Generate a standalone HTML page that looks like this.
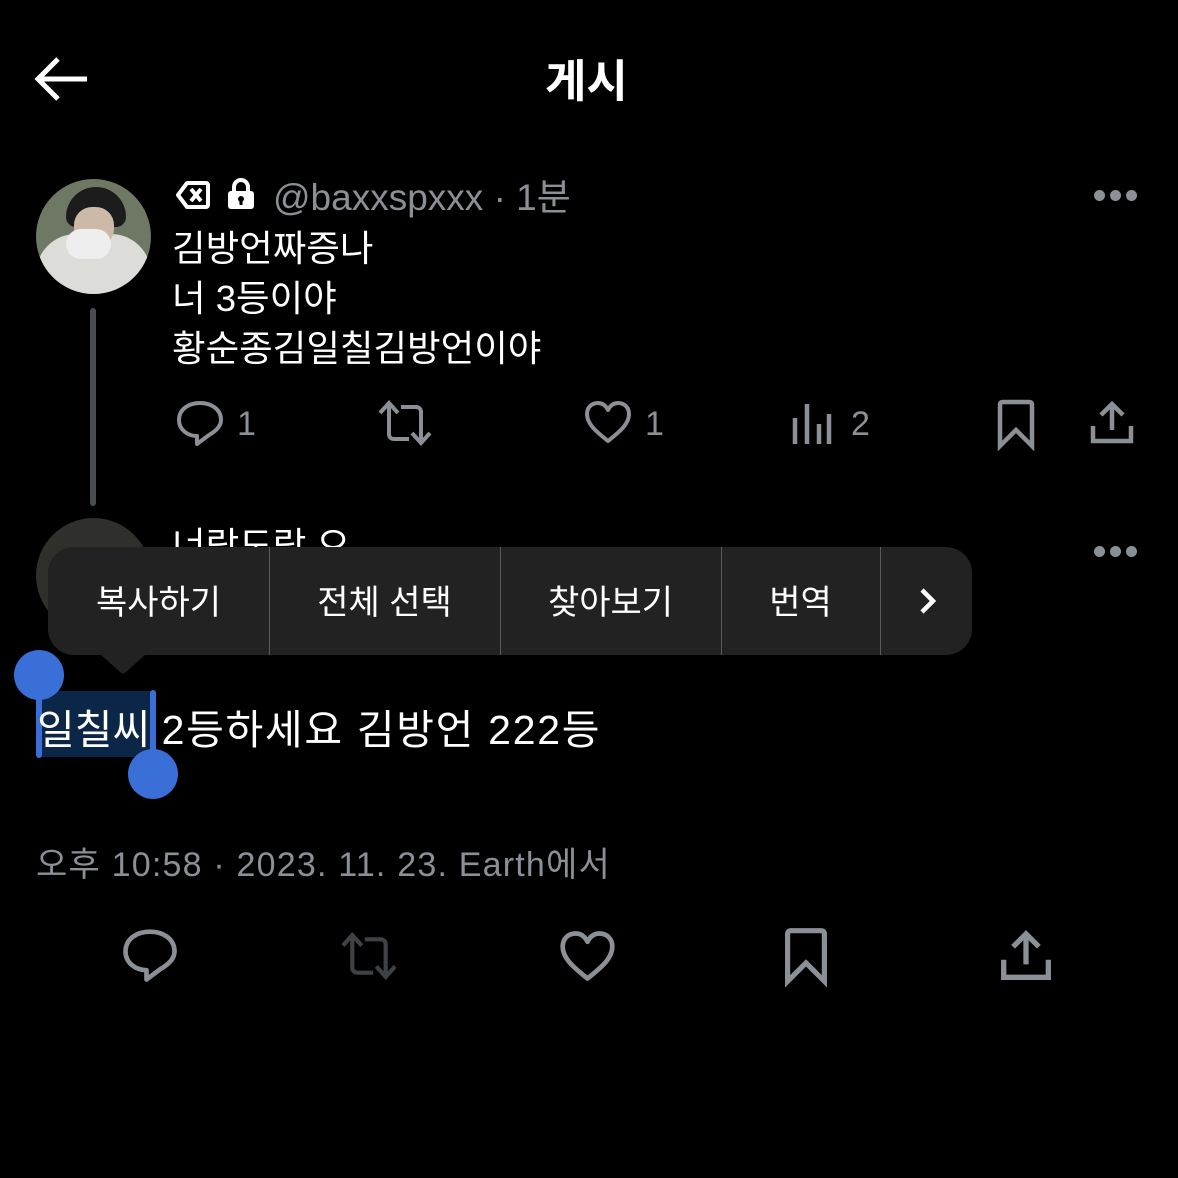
<!DOCTYPE html>
<html><head><meta charset="utf-8">
<style>
html,body{margin:0;padding:0;background:#000;}
body{width:1178px;height:1178px;position:relative;overflow:hidden;font-family:"Liberation Sans","Noto Sans CJK KR",sans-serif;}
.a{position:absolute;white-space:nowrap;}
.w{color:#fff;}
.g{color:#8b9097;}
svg{position:absolute;overflow:visible;}
</style></head><body>
<!-- header -->
<svg style="left:33px;top:56px" width="56" height="46" viewBox="0 0 56 46"><path d="M54 23H5M25 3L5 23l20 20" fill="none" stroke="#fff" stroke-width="5"/></svg>
<div class="a w" style="left:545px;top:48px;font-size:45px;line-height:60px;font-weight:bold;font-family:'Noto Sans CJK KR',sans-serif;">게시</div>

<!-- avatar 1 -->
<div class="a" style="left:36px;top:179px;width:115px;height:115px;border-radius:50%;overflow:hidden;background:#6f7864;">
  <div class="a" style="left:0;top:55px;width:115px;height:70px;background:#dcdcd8;border-radius:40px 40px 0 0"></div>
  <div class="a" style="left:30px;top:8px;width:60px;height:40px;background:#1c1c1c;border-radius:30px 30px 10px 10px"></div>
  <div class="a" style="left:38px;top:28px;width:40px;height:40px;background:#cdb9a8;border-radius:45%"></div>
  <div class="a" style="left:30px;top:50px;width:45px;height:30px;background:#eee;border-radius:20px"></div>
</div>
<div class="a" style="left:90px;top:308px;width:6px;height:198px;background:#4a4d50;border-radius:3px"></div>

<!-- user row -->
<svg style="left:175px;top:180px" width="36" height="30" viewBox="0 0 36 30"><path d="M12 3H31a2 2 0 0 1 2 2v20a2 2 0 0 1-2 2H12L3 15z" fill="none" stroke="#fff" stroke-width="4" stroke-linejoin="round"/><path d="M16 9l10 12M26 9L16 21" stroke="#fff" stroke-width="4"/></svg>
<svg style="left:227px;top:178px" width="28" height="32" viewBox="0 0 28 32"><path d="M7 14V9a7 7 0 0 1 14 0v5" fill="none" stroke="#fff" stroke-width="4"/><rect x="1" y="13" width="26" height="18" rx="3" fill="#fff"/><circle cx="14" cy="21" r="3" fill="#000"/><rect x="12.5" y="21" width="3" height="6" fill="#000"/></svg>
<div class="a g" style="left:273px;top:174px;font-size:37px;line-height:48px;">@baxxspxxx · 1분</div>
<div class="a" style="left:1094px;top:190px;">
  <span class="a" style="left:0;top:0;width:11px;height:11px;border-radius:50%;background:#8b9097"></span>
  <span class="a" style="left:16px;top:0;width:11px;height:11px;border-radius:50%;background:#8b9097"></span>
  <span class="a" style="left:32px;top:0;width:11px;height:11px;border-radius:50%;background:#8b9097"></span>
</div>

<div class="a w" style="left:172px;top:226px;font-size:36.5px;line-height:46px;">김방언짜증나</div>
<div class="a w" style="left:172px;top:276px;font-size:36.5px;line-height:46px;">너 3등이야</div>
<div class="a w" style="left:172px;top:326px;font-size:36.5px;line-height:46px;">황순종김일칠김방언이야</div>

<!-- action row 1 -->
<svg style="left:176px;top:399px" width="48" height="48" viewBox="0 0 48 48"><path d="M24 4C13 4 3 10 3 21c0 10 9 16 18 16v8l12-9c7-4 12-9 12-15C45 10 35 4 24 4z" fill="none" stroke="#8b9097" stroke-width="4" stroke-linejoin="round"/></svg>
<div class="a g" style="left:237px;top:403px;font-size:34px;line-height:42px;">1</div>
<svg style="left:378px;top:400px" width="54" height="46" viewBox="0 0 54 46"><path d="M2 13l9-10 9 10M11 4v30c0 3 2 5 5 5h15M52 33l-9 10-9-10M43 42V12c0-3-2-5-5-5H23" fill="none" stroke="#8b9097" stroke-width="4"/></svg>
<svg style="left:584px;top:400px" width="48" height="44" viewBox="0 0 48 44"><path d="M24 41C10 30 3 23 3 14 3 7 8 3 14 3c5 0 8 3 10 7 2-4 5-7 10-7 6 0 11 4 11 11 0 9-7 16-21 27z" fill="none" stroke="#8b9097" stroke-width="4" stroke-linejoin="round"/></svg>
<div class="a g" style="left:645px;top:403px;font-size:34px;line-height:42px;">1</div>
<svg style="left:792px;top:402px" width="40" height="42" viewBox="0 0 40 42"><path d="M3 16v26M15 2v40M27 22v20M37 12v30" stroke="#8b9097" stroke-width="4.5"/></svg>
<div class="a g" style="left:851px;top:403px;font-size:34px;line-height:42px;">2</div>
<svg style="left:996px;top:399px" width="40" height="50" viewBox="0 0 40 50"><path d="M4 47V6c0-2 1-3 3-3h26c2 0 3 1 3 3v41L20 31z" fill="none" stroke="#8b9097" stroke-width="4.5" stroke-linejoin="miter"/></svg>
<svg style="left:1089px;top:400px" width="46" height="44" viewBox="0 0 46 44"><path d="M23 30V4M12 15L23 4l11 11M4 26v15h38V26" fill="none" stroke="#8b9097" stroke-width="4.5"/></svg>

<!-- second tweet (partially hidden) -->
<div class="a" style="left:36px;top:518px;width:115px;height:115px;border-radius:50%;background:#2f2f2b;"></div>
<div class="a w" style="left:172px;top:523px;font-size:36.5px;line-height:46px;">너랑도랑 으</div>
<div class="a" style="left:1094px;top:546px;">
  <span class="a" style="left:0;top:0;width:11px;height:11px;border-radius:50%;background:#8b9097"></span>
  <span class="a" style="left:16px;top:0;width:11px;height:11px;border-radius:50%;background:#8b9097"></span>
  <span class="a" style="left:32px;top:0;width:11px;height:11px;border-radius:50%;background:#8b9097"></span>
</div>

<!-- menu -->
<div class="a" style="left:48px;top:547px;width:924px;height:108px;border-radius:26px;background:#222;"></div>
<svg style="left:100px;top:654px" width="46" height="20" viewBox="0 0 46 20"><path d="M0 0h46L26 18q-3 3-6 0z" fill="#222"/></svg>
<div class="a" style="left:269px;top:547px;width:1px;height:108px;background:#5a5a5a"></div>
<div class="a" style="left:500px;top:547px;width:1px;height:108px;background:#5a5a5a"></div>
<div class="a" style="left:721px;top:547px;width:1px;height:108px;background:#5a5a5a"></div>
<div class="a" style="left:880px;top:547px;width:1px;height:108px;background:#5a5a5a"></div>
<div class="a w" style="left:48px;top:580px;width:221px;text-align:center;font-size:34px;line-height:46px;">복사하기</div>
<div class="a w" style="left:269px;top:580px;width:231px;text-align:center;font-size:34px;line-height:46px;">전체 선택</div>
<div class="a w" style="left:500px;top:580px;width:221px;text-align:center;font-size:34px;line-height:46px;">찾아보기</div>
<div class="a w" style="left:721px;top:580px;width:159px;text-align:center;font-size:34px;line-height:46px;">번역</div>
<svg style="left:918px;top:587px" width="20" height="28" viewBox="0 0 20 28"><path d="M4 3l11 11L4 25" fill="none" stroke="#fff" stroke-width="4.5"/></svg>

<!-- selection -->
<div class="a" style="left:37px;top:691px;width:117px;height:66px;background:#0c2647;"></div>
<div class="a" style="left:36px;top:690px;width:6px;height:68px;background:#3a6fd8;border-radius:3px"></div>
<div class="a" style="left:150px;top:690px;width:6px;height:68px;background:#3a6fd8;border-radius:3px"></div>
<div class="a" style="left:14px;top:650px;width:50px;height:50px;border-radius:50%;background:#3a6fd8"></div>
<div class="a" style="left:128px;top:749px;width:50px;height:50px;border-radius:50%;background:#3a6fd8"></div>
<div class="a w" style="left:37px;top:703px;font-size:41px;line-height:54px;">일칠씨 <span style="letter-spacing:1.7px">2등하세요 김방언 222등</span></div>

<!-- timestamp -->
<div class="a g" style="left:36px;top:843px;font-size:34px;line-height:44px;letter-spacing:1.2px;">오후 10:58 · 2023. 11. 23. Earth에서</div>

<!-- bottom actions -->
<svg style="left:121px;top:927px" width="58" height="56" viewBox="0 0 48 48"><path d="M24 4C13 4 3 10 3 21c0 10 9 16 18 16v8l12-9c7-4 12-9 12-15C45 10 35 4 24 4z" fill="none" stroke="#8b9097" stroke-width="4" stroke-linejoin="round"/></svg>
<svg style="left:337px;top:932px" width="64" height="48" viewBox="0 0 54 46"><path d="M2 13l9-10 9 10M11 4v30c0 3 2 5 5 5h15M52 33l-9 10-9-10M43 42V12c0-3-2-5-5-5H23" fill="none" stroke="#3f4245" stroke-width="4"/></svg>
<svg style="left:559px;top:930px" width="57" height="52" viewBox="0 0 48 44"><path d="M24 41C10 30 3 23 3 14 3 7 8 3 14 3c5 0 8 3 10 7 2-4 5-7 10-7 6 0 11 4 11 11 0 9-7 16-21 27z" fill="none" stroke="#8b9097" stroke-width="4" stroke-linejoin="round"/></svg>
<svg style="left:783px;top:927px" width="46" height="58" viewBox="0 0 40 50"><path d="M4 47V6c0-2 1-3 3-3h26c2 0 3 1 3 3v41L20 31z" fill="none" stroke="#8b9097" stroke-width="4.5"/></svg>
<svg style="left:999px;top:929px" width="54" height="52" viewBox="0 0 46 44"><path d="M23 30V4M12 15L23 4l11 11M4 26v15h38V26" fill="none" stroke="#8b9097" stroke-width="4.5"/></svg>
</body></html>
